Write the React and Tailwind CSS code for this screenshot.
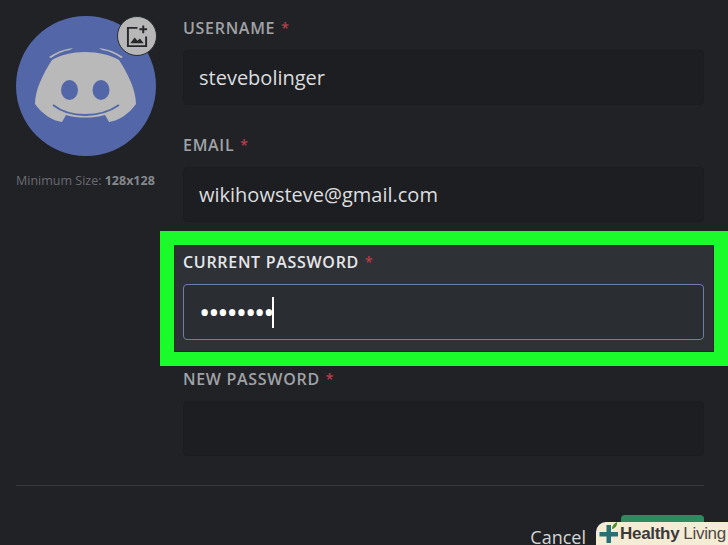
import React from "react";

const Label = ({ children, active }) => (
  <div className={`flex items-center h-[22px] -mb-[2px] text-[16px] font-semibold tracking-[0.7px] leading-5 ${active ? "text-[#e6e7e9]" : "text-[#a0a2a6]"}`}>
    {children}
    <span className="ml-[6px] text-[#b5404a] text-[14px]">*</span>
  </div>
);

const Field = ({ label, value }) => (
  <div className="mb-[29px]">
    <Label>{label}</Label>
    <div className="mt-[13px] h-[55px] rounded border border-[#1b1c20] bg-[#1d1e22] px-[15px] flex items-center text-[20px] text-[#dcddde]">
      {value}
    </div>
  </div>
);

const Avatar = () => (
  <div className="relative w-[140px] h-[140px] rounded-full bg-[#5367a8]">
    <svg viewBox="16 16 140 140" className="w-full h-full">
      {/* head */}
      <path
        fill="#b9b9b9"
        d="M52 60C60 55 72 52 85 52C98 52 111 55 119 60C128 74 136 90 136 104C129 114 118 121 109 122L105 115C98 117 92 117.500 85 117.500C78 117.500 72 117 66 115L62 122C53 121 42 114 35 104C35 90 43 74 52 60Z"
      />
      <path fill="#b9b9b9" d="M49 57C56 52 64 49 73 48L70 50C63 51 56 54 51 58Z" />
      <path fill="#b9b9b9" d="M123 57C116 52 108 49 99 48L102 50C109 51 116 54 121 58Z" />
      <path fill="none" stroke="#5367a8" strokeWidth="1.800" d="M53 105C62 112 73 115 85 115C97 115 109 112 119 105" />
      <ellipse cx="69.500" cy="90" rx="8.500" ry="10" fill="#5367a8" />
      <ellipse cx="101" cy="90" rx="8.500" ry="10" fill="#5367a8" />
    </svg>
    <div className="absolute right-[-1px] top-[0px] w-10 h-10 rounded-full bg-[#b7b7b7] border border-[#2a2b2f] flex items-center justify-center">
      <svg viewBox="0 0 24 24" className="w-[23px] h-[23px]" fill="none" stroke="#26272b" strokeWidth="2">
        <path d="M12 3H2V22H21V12" />
        <path d="M18 0.500V8.500M14 4.500H22" />
        <path fill="#26272b" stroke="none" d="M4.500 19L9 13L12 16.500L14.500 14L18.500 19Z" />
      </svg>
    </div>
  </div>
);

export default function App() {
  return (
    <div className="w-[728px] h-[545px] overflow-hidden bg-[#212226] font-['Open_Sans','Noto_Sans',sans-serif] flex flex-col">
      <div className="flex shrink-0 pl-4 pr-6">
        {/* Avatar column */}
        <div className="w-[167px] shrink-0 pt-4">
          <Avatar />
          <div className="mt-[17px] w-[140px] text-[12.5px] leading-4 whitespace-nowrap text-[#696c72]">
            Minimum Size: <span className="font-bold text-[#85888d]">128x128</span>
          </div>
        </div>

        {/* Form column */}
        <div className="flex-1 pt-[17px]">
          <Field label="USERNAME" value="stevebolinger" />
          <Field label="EMAIL" value="wikihowsteve@gmail.com" />

          {/* Green highlight around the focused field */}
          <div className="-mt-[20px] -ml-[23px] -mr-[24px] mb-[2px] border-[#1bfb2b] border-y-[15px] border-l-[15px] border-r-[15px]">
            <div className="bg-[#2e3136] pt-[5px] pb-[11px] pl-2 pr-[9px] outline outline-[#1e2a22]">
              <Label active>CURRENT PASSWORD</Label>
              <div className="mt-[13px] h-14 rounded border border-[#6f7bae] bg-[#2a2d32] pl-[15px] flex items-center">
                <span className="text-[30px] leading-none tracking-[-2.100px] text-white">••••••••</span>
                <span className="mt-px w-[2px] h-[31px] bg-white" />
              </div>
            </div>
          </div>

          <Field label="NEW PASSWORD" value="" />
        </div>
      </div>

      <div className="ml-4 mr-6 h-px shrink-0 bg-[#36383d]" />

      <div className="relative shrink-0 flex justify-end items-start pr-6 pt-[29px]">
        <span className="mt-[7px] mr-[35px] text-[18px] leading-[30px] text-[#d5d6d8]">Cancel</span>
        <div className="w-[83px] h-10 rounded bg-[#2f8a5f]" />

        {/* Watermark */}
        <div className="absolute left-[596px] top-[36px] w-[132px] h-[24px] rounded-tl-[10px] bg-[#f5ecd6] flex items-center pl-[2px] font-['Liberation_Sans',sans-serif]">
          <svg viewBox="0 0 22 24" className="w-[22px] h-[24px] shrink-0 overflow-visible">
            <path d="M8.500 3H13V10H20V14.500H13V21H8.500V14.500H1.500V10H8.500Z" fill="#2a6f78" />
            <path d="M14 7C14 4 16 1.500 19 0C19.500 3 17.500 6.500 14 7Z" fill="#4c8b3a" />
          </svg>
          <span className="text-[17px] font-bold text-[#3a3a3a] tracking-[-0.300px]">Healthy</span>
          <span className="ml-1 text-[17px] text-[#4a4a4a] tracking-[-0.300px]">Living</span>
        </div>
      </div>
    </div>
  );
}
